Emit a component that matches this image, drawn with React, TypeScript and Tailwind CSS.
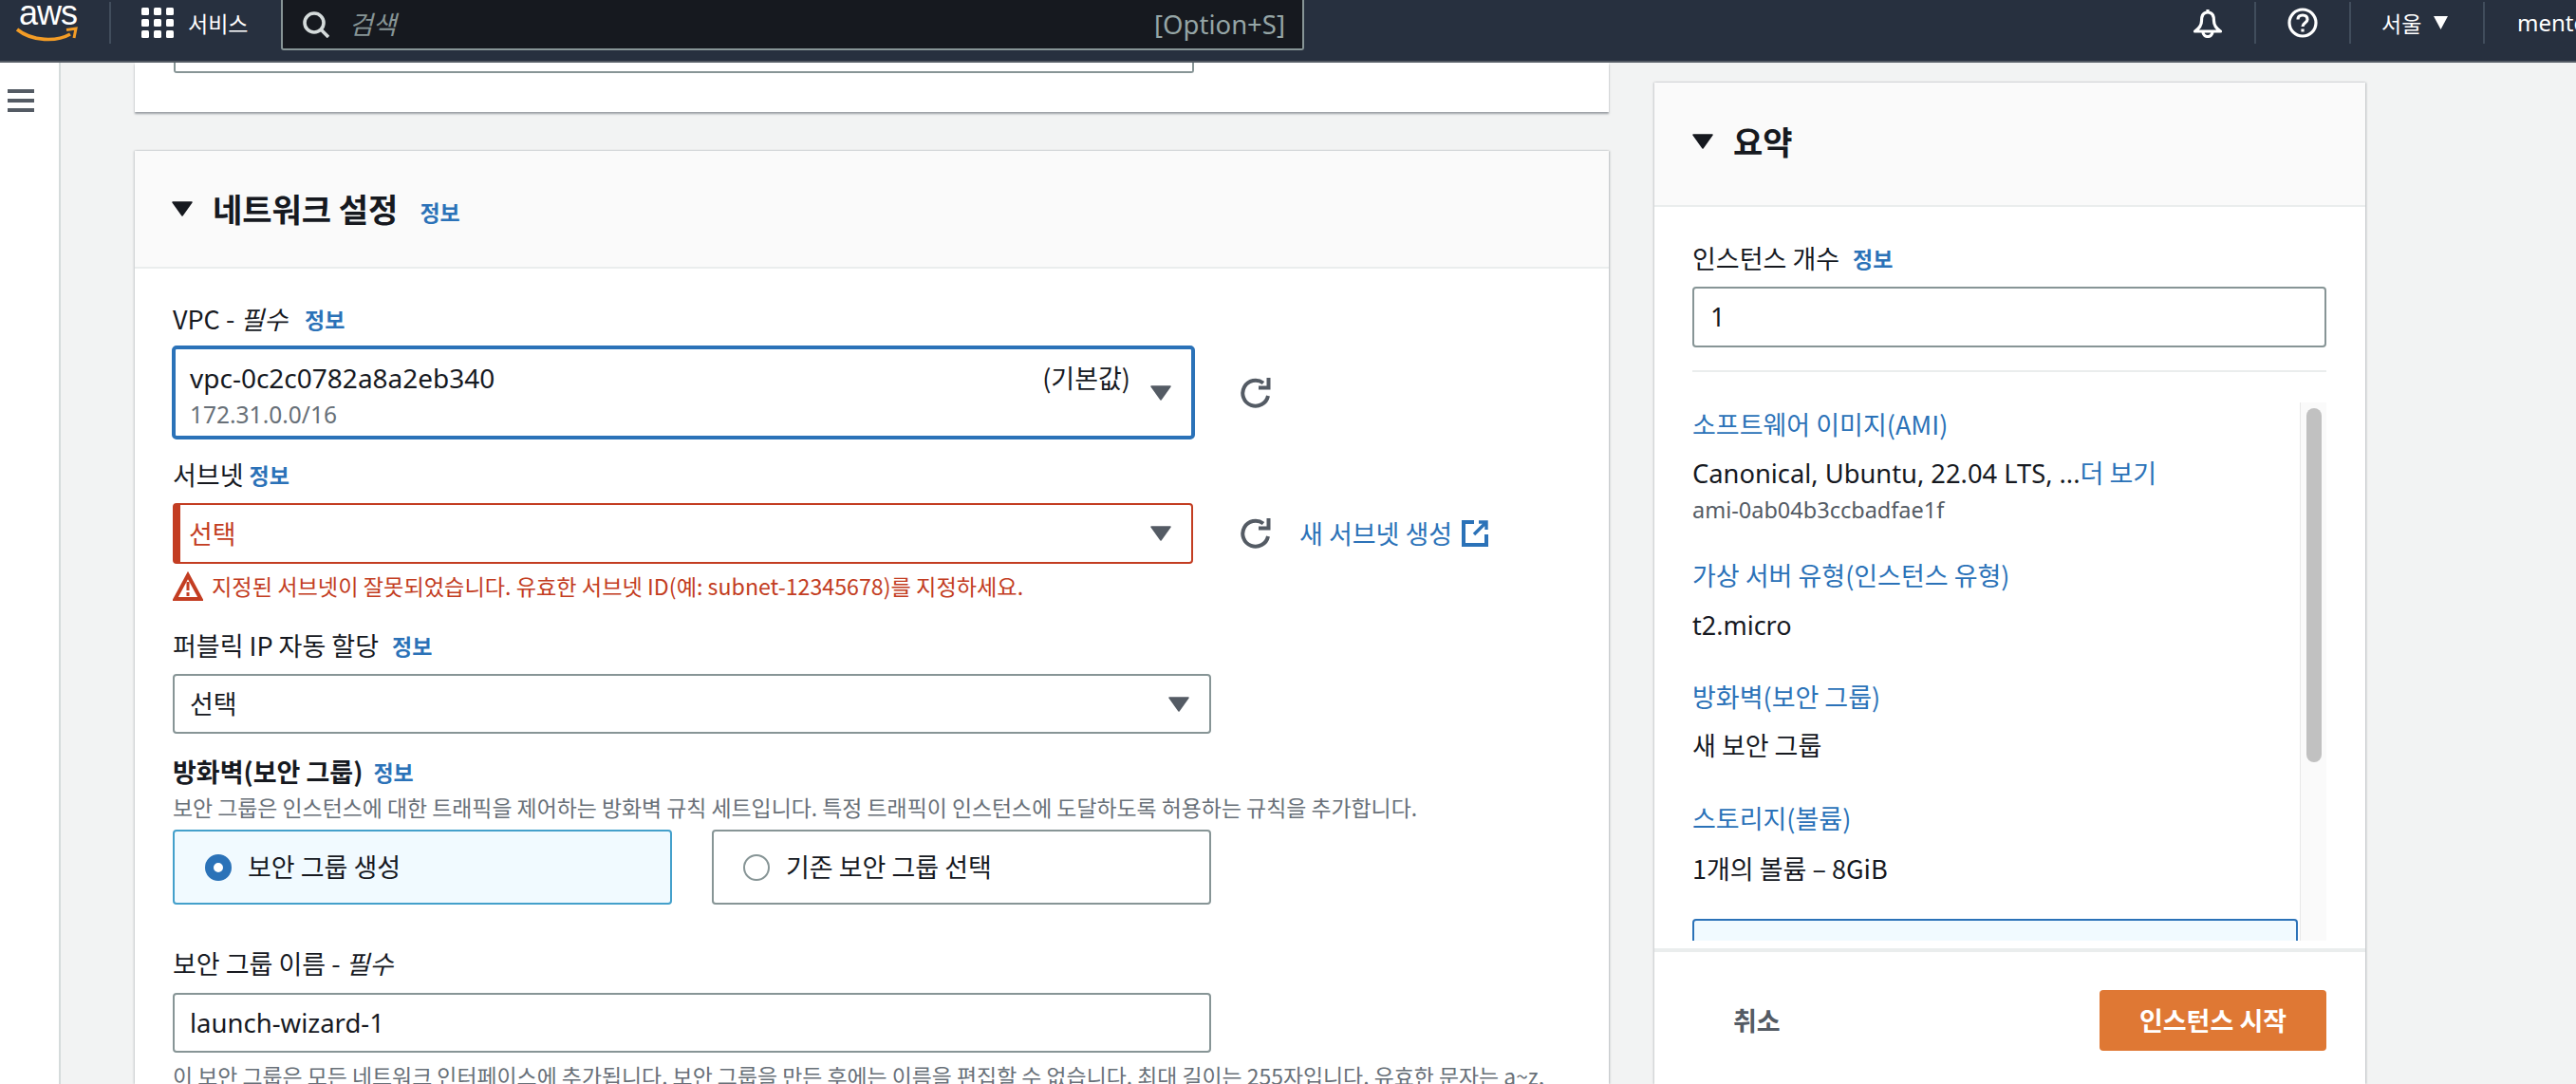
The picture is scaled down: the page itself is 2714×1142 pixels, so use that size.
import React from "react";

const Info = ({ className = "" }: { className?: string }) => (
  <span className={`text-[23px] font-bold text-[#2b72b8] leading-[28px] ${className}`}>정보</span>
);

const Caret = ({ className = "" }: { className?: string }) => (
  <svg width="22" height="16" viewBox="0 0 22 16" className={`shrink-0 ${className}`}>
    <path d="M1 1H21L11 15Z" fill="currentColor" stroke="currentColor" strokeWidth="1.5" strokeLinejoin="round" />
  </svg>
);

const Refresh = () => (
  <svg width="32" height="32" viewBox="0 0 32 32" fill="none" stroke="#545b64" strokeWidth="4" className="shrink-0">
    <path d="M29 19A13.5 13.5 0 1 1 24 5.5" />
    <path d="M29.5 0V10.5H19" />
  </svg>
);

const Radio = ({ on }: { on: boolean }) =>
  on ? (
    <span className="w-[28px] h-[28px] rounded-full border-[9px] border-[#2b72b8] bg-white shrink-0" />
  ) : (
    <span className="w-[28px] h-[28px] rounded-full border-2 border-[#879596] bg-white shrink-0" />
  );

export default function App() {
  return (
    <div className="w-[2714px] h-[1142px] overflow-hidden flex flex-col bg-[#f2f3f3] text-[#16191f] font-['Noto_Sans_CJK_KR','Noto_Sans',sans-serif] text-[27px]">
      {/* header */}
      <header className="h-[66px] shrink-0 bg-[#27303f] border-b-2 border-[#545b64] flex items-start text-white overflow-hidden">
        <div className="w-[115px] h-[46px] relative shrink-0">
          <span className="absolute left-[20px] top-[2px] text-[36px] leading-[24px] tracking-[-1px] font-['Liberation_Sans',sans-serif]">aws</span>
          <svg width="66" height="16" viewBox="0 0 66 16" className="absolute left-[16px] top-[28px]">
            <path d="M2 3C18 16 44 16 58 8" fill="none" stroke="#f39c26" strokeWidth="3.6" />
            <path d="M54 3.5L64 2L62 12" fill="none" stroke="#f39c26" strokeWidth="3" />
          </svg>
        </div>
        <div className="w-[2px] h-[44px] mt-[2px] bg-[#414d5c] shrink-0" />
        <svg width="34" height="32" viewBox="0 0 34 32" fill="#fff" className="ml-[32px] mt-[8px] shrink-0">
          <rect x="0" y="0" width="8" height="8" rx="1.5" /><rect x="13" y="0" width="8" height="8" rx="1.5" /><rect x="26" y="0" width="8" height="8" rx="1.5" />
          <rect x="0" y="12" width="8" height="8" rx="1.5" /><rect x="13" y="12" width="8" height="8" rx="1.5" /><rect x="26" y="12" width="8" height="8" rx="1.5" />
          <rect x="0" y="24" width="8" height="8" rx="1.5" /><rect x="13" y="24" width="8" height="8" rx="1.5" /><rect x="26" y="24" width="8" height="8" rx="1.5" />
        </svg>
        <span className="ml-[15px] w-[98px] h-[48px] leading-[48px] text-[23px] shrink-0">서비스</span>
        <div className="w-[1078px] h-[53px] bg-[#16191f] border-l-2 border-r-2 border-b-2 border-[#879596] rounded-b-[3px] flex items-center pl-[21px] pr-[18px] shrink-0">
          <svg width="28" height="28" viewBox="0 0 28 28" fill="none" stroke="#d5dbdb" strokeWidth="3.6" className="shrink-0">
            <circle cx="12" cy="12" r="10" />
            <path d="M19 19L27 27" />
          </svg>
          <span className="ml-[21px] italic text-[27px] text-[#879596]">검색</span>
          <span className="ml-auto text-[27.5px] text-[#95a5a6] font-['Noto_Sans',sans-serif]">[Option+S]</span>
        </div>
        <svg width="32" height="32" viewBox="0 0 32 32" fill="none" stroke="#fff" strokeWidth="3.2" className="ml-[936px] mt-[8px] shrink-0">
          <path d="M16 2L16 5M16 5C10 5 9.5 10 9.5 14C9.5 19 7 22 2.5 25H29.5C25 22 22.5 19 22.5 14C22.5 10 22 5 16 5Z" strokeLinejoin="round" />
          <path d="M11 25.5A5 5 0 0 0 21 25.5" />
        </svg>
        <div className="w-[2px] h-[44px] mt-[2px] ml-[33px] bg-[#414d5c] shrink-0" />
        <svg width="32" height="32" viewBox="0 0 32 32" fill="none" stroke="#fff" strokeWidth="3.2" className="ml-[33px] mt-[8px] shrink-0">
          <circle cx="16" cy="16" r="14" />
          <path d="M11 12.5C11 9.5 13 8 16 8C19 8 21 9.5 21 12.5C21 16 16 16 16 20" />
          <path d="M16 22.5V25.5" />
        </svg>
        <div className="w-[2px] h-[44px] mt-[2px] ml-[33px] bg-[#414d5c] shrink-0" />
        <span className="ml-[32px] w-[46px] h-[48px] leading-[48px] text-[23px] whitespace-nowrap shrink-0">서울</span>
        <svg width="15" height="14" viewBox="0 0 15 14" fill="#fff" className="ml-[9px] mt-[17px] shrink-0"><path d="M0 0H15L7.5 14Z" /></svg>
        <div className="w-[2px] h-[44px] mt-[2px] ml-[37px] bg-[#414d5c] shrink-0" />
        <span className="ml-[34px] h-[48px] leading-[48px] text-[24px] shrink-0 font-['Noto_Sans',sans-serif]">mentee</span>
      </header>

      <div className="flex-1 flex min-h-0">
        {/* side nav */}
        <aside className="w-[64px] shrink-0 bg-white border-r-2 border-[#d5dbdb] pl-[8px] pt-[28px]">
          <div className="w-[28px] flex flex-col gap-[6px]">
            <div className="h-[4px] bg-[#545b64]" />
            <div className="h-[4px] bg-[#545b64]" />
            <div className="h-[4px] bg-[#545b64]" />
          </div>
        </aside>

        <main className="flex-1 flex pl-[78px] gap-[48px] min-w-0">
          {/* left column */}
          <div className="w-[1553px] shrink-0 flex flex-col">
            <div className="h-[52px] shrink-0 bg-white pl-[41px] shadow-[0_2px_2px_rgba(84,91,100,0.55)]">
              <div className="w-[1075px] h-[11px] border-x-2 border-b-2 border-[#879596] rounded-b-[3px]" />
            </div>

            <section className="mt-[41px] flex-1 min-h-0 bg-white shadow-[1px_0_2px_rgba(84,91,100,0.35),-1px_0_2px_rgba(84,91,100,0.25)] overflow-hidden">
              <div className="h-[124px] bg-[#fafafa] border-b-2 border-[#eaeded] flex items-center pl-[39px] pb-[1px]">
                <Caret className="text-[#16191f]" />
                <h2 className="ml-[21px] text-[34px] font-bold leading-[40px]">네트워크 설정</h2>
                <Info className="ml-[23px] mt-[6px]" />
              </div>

              <div className="pl-[40px] flex flex-col items-start">
                <div className="mt-[39px] h-[28px] leading-[28px] flex items-center gap-[18px]">
                  <span>VPC - <i>필수</i></span>
                  <Info />
                </div>
                <div className="mt-[14px] -ml-[1px] flex items-center gap-[48px]">
                  <div className="w-[1078px] h-[99px] border-[4px] border-[#2b72b8] rounded-[5px] flex pl-[15px] pr-[21px] relative">
                    <div className="flex flex-col">
                      <span className="mt-[14px] h-[32px] leading-[32px] text-[28px] font-['Noto_Sans',sans-serif]">vpc-0c2c0782a8a2eb340</span>
                      <span className="mt-[9px] h-[28px] leading-[28px] text-[24.5px] text-[#687078] font-['Noto_Sans',sans-serif]">172.31.0.0/16</span>
                    </div>
                    <span className="ml-auto mt-[14px] h-[32px] leading-[32px]">(기본값)</span>
                    <Caret className="ml-[21px] mt-[38px] text-[#545b64]" />
                  </div>
                  <Refresh />
                </div>

                <div className="mt-[23px] h-[28px] leading-[28px] flex items-center gap-[6px]">
                  <span>서브넷</span>
                  <Info />
                </div>
                <div className="mt-[16px] flex items-center gap-[50px]">
                  <div className="w-[1075px] h-[64px] border-2 border-l-[8px] border-[#c33d22] rounded-[4px] flex items-center pl-[9px] pr-[21px]">
                    <span className="text-[#c33d22]">선택</span>
                    <Caret className="ml-auto text-[#545b64]" />
                  </div>
                  <Refresh />
                  <span className="ml-[-20px] text-[#2b72b8]">새 서브넷 생성</span>
                  <svg width="28" height="28" viewBox="0 0 28 28" fill="none" stroke="#2b72b8" strokeWidth="4" className="ml-[-40px] shrink-0">
                    <path d="M13 2H2V26H26V15" />
                    <path d="M13 15L26 2M18 2H26V10" strokeWidth="3.4" />
                  </svg>
                </div>

                <div className="mt-[8px] h-[31px] flex items-center text-[#c33d22] text-[23.2px]">
                  <svg width="32" height="31" viewBox="0 0 32 31" fill="none" stroke="#c33d22" strokeWidth="4" strokeLinejoin="miter" className="shrink-0">
                    <path d="M16 4L29.5 29H2.5Z" />
                    <path d="M16 11V20M16 22V26" strokeWidth="3" />
                  </svg>
                  <span className="ml-[9px]">지정된 서브넷이 잘못되었습니다. 유효한 서브넷 ID(예: subnet-12345678)를 지정하세요.</span>
                </div>

                <div className="mt-[33px] h-[28px] leading-[28px] flex items-center gap-[14px]">
                  <span>퍼블릭 IP 자동 할당</span>
                  <Info />
                </div>
                <div className="mt-[16px] w-[1094px] h-[63px] border-2 border-[#879596] rounded-[4px] flex items-center pl-[16px] pr-[21px]">
                  <span>선택</span>
                  <Caret className="ml-auto text-[#545b64]" />
                </div>

                <div className="mt-[26px] h-[28px] leading-[28px] flex items-center gap-[11px]">
                  <span className="font-bold">방화벽(보안 그룹)</span>
                  <Info />
                </div>
                <div className="mt-[9px] h-[28px] leading-[28px] text-[22.9px] text-[#687078] whitespace-nowrap">
                  보안 그룹은 인스턴스에 대한 트래픽을 제어하는 방화벽 규칙 세트입니다. 특정 트래픽이 인스턴스에 도달하도록 허용하는 규칙을 추가합니다.
                </div>
                <div className="mt-[10px] flex gap-[42px]">
                  <div className="w-[526px] h-[79px] border-2 border-[#44a0cb] bg-[#f1faff] rounded-[4px] flex items-center pl-[32px] gap-[17px]">
                    <Radio on />
                    <span>보안 그룹 생성</span>
                  </div>
                  <div className="w-[526px] h-[79px] border-2 border-[#879596] rounded-[4px] flex items-center pl-[31px] gap-[17px]">
                    <Radio on={false} />
                    <span>기존 보안 그룹 선택</span>
                  </div>
                </div>

                <div className="mt-[48px] h-[28px] leading-[28px]">
                  보안 그룹 이름 - <i>필수</i>
                </div>
                <div className="mt-[17px] w-[1094px] h-[63px] border-2 border-[#879596] rounded-[4px] flex items-center pl-[16px]">
                  <span className="font-['Noto_Sans',sans-serif] text-[27.5px]">launch-wizard-1</span>
                </div>
                <div className="mt-[10px] h-[28px] leading-[28px] text-[22.9px] text-[#687078] whitespace-nowrap">
                  이 보안 그룹은 모든 네트워크 인터페이스에 추가됩니다. 보안 그룹을 만든 후에는 이름을 편집할 수 없습니다. 최대 길이는 255자입니다. 유효한 문자는 a~z,
                </div>
              </div>
            </section>
          </div>

          {/* right column */}
          <div className="w-[749px] shrink-0 pt-[21px] flex flex-col">
            <section className="flex-1 min-h-0 bg-white shadow-[1px_0_2px_rgba(84,91,100,0.35),-1px_0_2px_rgba(84,91,100,0.25)] flex flex-col overflow-hidden">
              <div className="h-[131px] shrink-0 bg-[#fafafa] border-b-2 border-[#eaeded] flex items-center pl-[40px] pb-[5px]">
                <Caret className="text-[#16191f]" />
                <h2 className="ml-[21px] text-[34px] font-bold leading-[40px]">요약</h2>
              </div>

              <div className="pl-[40px] pr-[41px] flex flex-col shrink-0">
                <div className="mt-[40px] h-[28px] leading-[28px] flex items-center gap-[14px]">
                  <span>인스턴스 개수</span>
                  <Info />
                </div>
                <div className="mt-[16px] h-[64px] border-2 border-[#879596] rounded-[4px] flex items-center pl-[17px]">
                  <span className="font-['Noto_Sans',sans-serif]">1</span>
                </div>
                <div className="mt-[24px] h-[2px] bg-[#eaeded]" />

                <div className="mt-[32px] h-[567px] flex overflow-hidden">
                  <div className="w-[640px] shrink-0 flex flex-col">
                    <a className="mt-[9px] h-[28px] leading-[28px] text-[#2b72b8]">소프트웨어 이미지(AMI)</a>
                    <div className="mt-[23px] h-[28px] leading-[28px] whitespace-nowrap">
                      <span className="font-['Noto_Sans',sans-serif] text-[27.3px]">Canonical, Ubuntu, 22.04 LTS, ...</span>
                      <span className="text-[#2b72b8]">더 보기</span>
                    </div>
                    <div className="mt-[11px] h-[28px] leading-[28px] text-[23.5px] text-[#545b64] font-['Noto_Sans',sans-serif]">ami-0ab04b3ccbadfae1f</div>
                    <a className="mt-[41px] h-[28px] leading-[28px] text-[#2b72b8]">가상 서버 유형(인스턴스 유형)</a>
                    <div className="mt-[25px] h-[28px] leading-[28px] font-['Noto_Sans',sans-serif]">t2.micro</div>
                    <a className="mt-[47px] h-[28px] leading-[28px] text-[#2b72b8]">방화벽(보안 그룹)</a>
                    <div className="mt-[23px] h-[28px] leading-[28px]">새 보안 그룹</div>
                    <a className="mt-[49px] h-[28px] leading-[28px] text-[#2b72b8]">스토리지(볼륨)</a>
                    <div className="mt-[25px] h-[28px] leading-[28px]">1개의 볼륨 – 8GiB</div>
                    <div className="mt-[39px] h-[60px] w-[638px] shrink-0 border-2 border-[#2b72b8] rounded-[4px] bg-[#f1faff]" />
                  </div>
                  <div className="w-[28px] shrink-0 bg-[#fafafa] border-l border-[#e8e8e8] pl-[6px] pt-[6px]">
                    <div className="w-[16px] h-[373px] rounded-[8px] bg-[#c1c1c1]" />
                  </div>
                </div>
                <div className="h-[8px] shrink-0" />
              </div>

              <div className="flex-1 min-h-0 border-t-4 border-[#eaeded] pt-[40px] pr-[41px] pl-[83px] flex items-start justify-between">
                <span className="h-[64px] leading-[64px] font-bold text-[#545b64]">취소</span>
                <div className="w-[239px] h-[64px] rounded-[4px] bg-[#df7834] text-white font-bold flex items-center justify-center">인스턴스 시작</div>
              </div>
            </section>
          </div>
        </main>
      </div>
    </div>
  );
}
